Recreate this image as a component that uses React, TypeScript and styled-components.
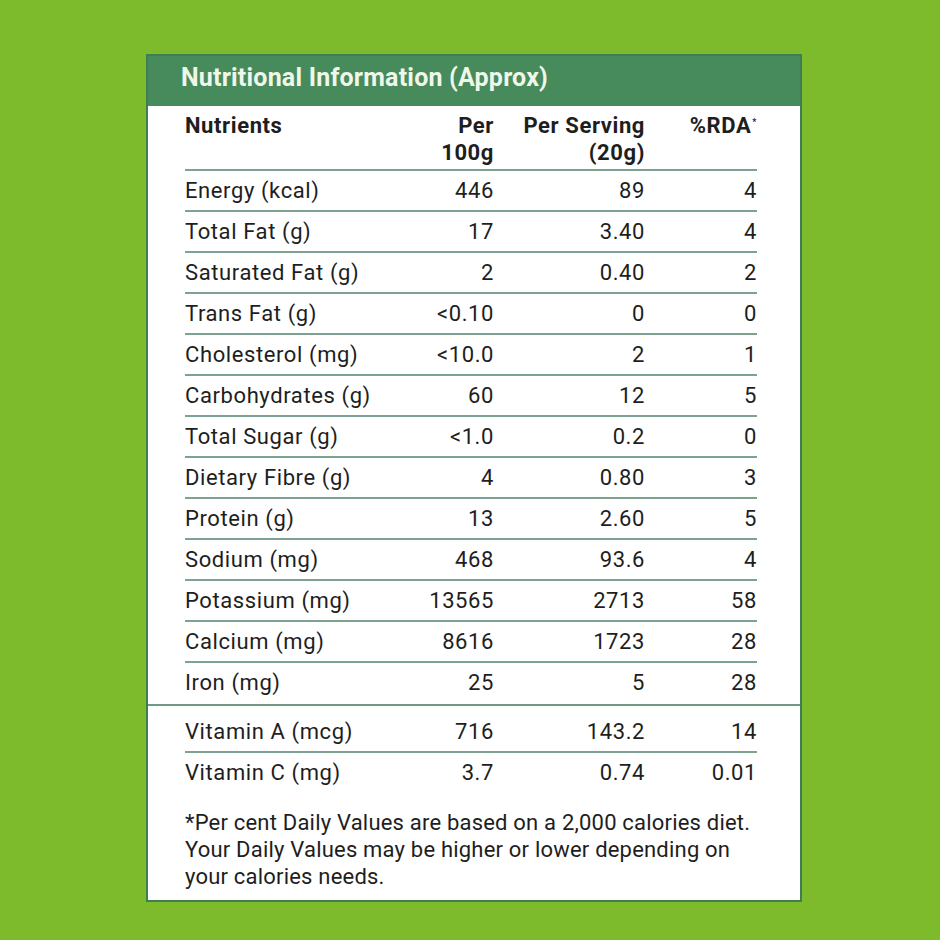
import styled, { createGlobalStyle } from "styled-components";

const GlobalStyle = createGlobalStyle`
  html, body {
    margin: 0;
    padding: 0;
    background: #7dbb2c;
  }
  body {
    font-family: Roboto, "Noto Sans", Arial, sans-serif;
  }
`;

// page + card
const Page = styled.div`
  width: 940px;
  height: 940px;
  box-sizing: border-box;
  padding: 54px 138px 38px 146px;
  background: #7dbb2c;
`;

const Card = styled.section`
  width: 656px;
  height: 848px;
  box-sizing: border-box;
  background: #ffffff;
  border: 2px solid #3f7d52;
  display: flex;
  flex-direction: column;
`;

const Header = styled.header`
  height: 50px;
  box-sizing: border-box;
  background: #478a5b;
  display: flex;
  align-items: center;
  padding: 0 0 7px 33px;
`;

const Title = styled.h1`
  margin: 0;
  font-size: 25px;
  font-weight: 700;
  color: #eef7ea;
  letter-spacing: 0.2px;
`;

const Body = styled.div`
  display: flex;
  flex-direction: column;
  padding-top: 6px;
`;

const Table = styled.div`
  width: 572px;
  margin-left: 37px;
  display: grid;
  grid-template-columns: 215px 94px 151px 112px;
  font-size: 22px;
  letter-spacing: 0.6px;
  color: #1e1e1e;
`;

const Cell = styled.div<{ $align?: "left" | "right"; $head?: boolean; $line?: boolean; $top?: number }>`
  text-align: ${(p) => p.$align || "right"};
  font-weight: ${(p) => (p.$head ? 700 : 400)};
  line-height: ${(p) => (p.$head ? "27px" : "39px")};
  padding-bottom: ${(p) => (p.$head ? "3px" : "0")};
  padding-top: ${(p) => (p.$top ? `${p.$top}px` : "0")};
  border-bottom: ${(p) => (p.$line ? "2px solid #7ea291" : "none")};
  white-space: nowrap;
`;

const Sup = styled.sup`
  font-size: 9px;
  vertical-align: top;
  position: relative;
  top: -3px;
  margin-left: 1px;
`;

const Divider = styled.div`
  height: 2px;
  background: #6f9a84;
  margin-top: 2px;
`;

const Footnote = styled.p`
  margin: 17px 0 0 37px;
  width: 590px;
  font-size: 22px;
  letter-spacing: 0.2px;
  line-height: 27px;
  color: #1e1e1e;
`;

type Row = [string, string, string, string];

const main: Row[] = [
  ["Energy (kcal)", "446", "89", "4"],
  ["Total Fat (g)", "17", "3.40", "4"],
  ["Saturated Fat (g)", "2", "0.40", "2"],
  ["Trans Fat (g)", "<0.10", "0", "0"],
  ["Cholesterol (mg)", "<10.0", "2", "1"],
  ["Carbohydrates (g)", "60", "12", "5"],
  ["Total Sugar (g)", "<1.0", "0.2", "0"],
  ["Dietary Fibre (g)", "4", "0.80", "3"],
  ["Protein (g)", "13", "2.60", "5"],
  ["Sodium (mg)", "468", "93.6", "4"],
  ["Potassium (mg)", "13565", "2713", "58"],
  ["Calcium (mg)", "8616", "1723", "28"],
  ["Iron (mg)", "25", "5", "28"],
];

const vitamins: Row[] = [
  ["Vitamin A (mcg)", "716", "143.2", "14"],
  ["Vitamin C (mg)", "3.7", "0.74", "0.01"],
];

const renderRows = (rows: Row[], lastLine: boolean, top = 0) =>
  rows.map((r, i) => {
    const line = i < rows.length - 1 || lastLine;
    const t = i === 0 ? top : 0;
    return r.map((v, j) => (
      <Cell key={`${r[0]}-${j}`} $align={j === 0 ? "left" : "right"} $line={line} $top={t}>
        {v}
      </Cell>
    ));
  });

const App = () => {
  return (
    <>
      <GlobalStyle />
      <Page>
        <Card>
          <Header>
            <Title>Nutritional Information (Approx)</Title>
          </Header>
          <Body>
            <Table>
              <Cell $head $line $align="left">Nutrients</Cell>
              <Cell $head $line>
                Per
                <br />
                100g
              </Cell>
              <Cell $head $line>
                Per Serving
                <br />
                (20g)
              </Cell>
              <Cell $head $line>
                %RDA<Sup>*</Sup>
              </Cell>
              {renderRows(main, false)}
            </Table>
            <Divider />
            <Table>{renderRows(vitamins, false, 6)}</Table>
            <Footnote>
              *Per cent Daily Values are based on a 2,000 calories diet.
              <br />
              Your Daily Values may be higher or lower depending on
              <br />
              your calories needs.
            </Footnote>
          </Body>
        </Card>
      </Page>
    </>
  );
};

export default App;
